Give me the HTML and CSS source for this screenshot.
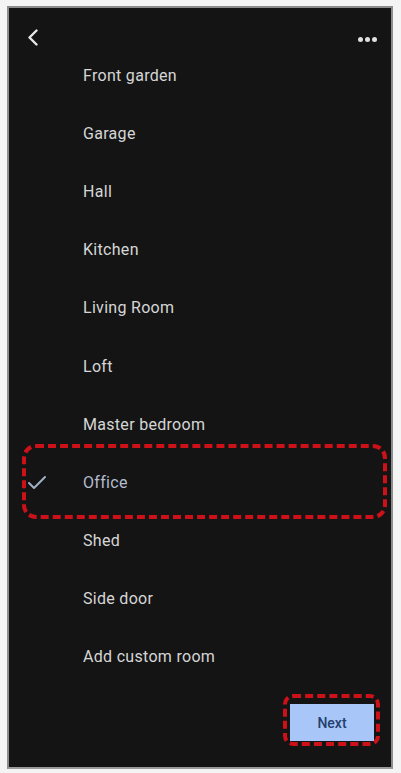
FILE: index.html
```html
<!DOCTYPE html>
<html lang="en">
<head>
    <meta charset="UTF-8">
    <meta name="viewport" content="width=device-width, initial-scale=1.0">
    <title>Choose room</title>
    <link rel="stylesheet" href="styles.css">
</head>
<body>
    <div class="screen">
        <div class="top-bar">
            <svg class="back-icon" width="12" height="17" viewBox="0 0 12 17">
                <path d="M9.5 1.5 L2.5 8.5 L9.5 15.5" fill="none" stroke="#e8e8e8" stroke-width="2.4" stroke-linecap="round" stroke-linejoin="round"/>
            </svg>
            <div class="more-icon">
                <span></span><span></span><span></span>
            </div>
        </div>

        <ul class="room-list">
            <li class="room">Front garden</li>
            <li class="room">Garage</li>
            <li class="room">Hall</li>
            <li class="room">Kitchen</li>
            <li class="room">Living Room</li>
            <li class="room">Loft</li>
            <li class="room">Master bedroom</li>
            <li class="room selected">
                <svg class="check" width="20" height="15" viewBox="0 0 20 15">
                    <path d="M2 8 L7 13 L18 2" fill="none" stroke="#9fb1c6" stroke-width="2" stroke-linecap="round" stroke-linejoin="round"/>
                </svg>
                Office
                <div class="highlight"></div>
            </li>
            <li class="room">Shed</li>
            <li class="room">Side door</li>
            <li class="room">Add custom room</li>
        </ul>

        <div class="footer">
            <div class="next-wrap">
                <button class="next-btn">Next</button>
            </div>
        </div>
    </div>
</body>
</html>
```

FILE: styles.css
```css
* {
    margin: 0;
    padding: 0;
    box-sizing: border-box;
}

body {
    background: #f4f4f4;
    font-family: 'Roboto', 'Liberation Sans', sans-serif;
    padding: 6px 0 0 7px;
}

.screen {
    width: 386px;
    height: 763px;
    background: #141414;
    border: 2px solid #8c8c8c;
    border-bottom-color: #9a9a9a;
    display: flex;
    flex-direction: column;
}

.top-bar {
    height: 38px;
    display: flex;
    justify-content: space-between;
    align-items: flex-start;
    padding: 21px 14px 0 18px;
}

.back-icon {
    display: block;
}

.more-icon {
    display: flex;
    gap: 2px;
    margin-top: 8px;
}

.more-icon span {
    width: 5px;
    height: 5px;
    border-radius: 50%;
    background: #e0e0e0;
}

.room-list {
    list-style: none;
}

.room {
    position: relative;
    height: 58.2px;
    display: flex;
    align-items: center;
    padding-left: 74px;
    color: #d6d6d6;
    font-size: 16px;
    letter-spacing: 0.3px;
}

.room.selected {
    color: #b3bccd;
}

.check {
    position: absolute;
    left: 18px;
    top: 22px;
}

.highlight {
    position: absolute;
    left: 13px;
    right: 4px;
    top: -9px;
    bottom: -7px;
    border: 4px dashed #cc1118;
    border-radius: 14px;
}

.footer {
    flex: 1;
    display: flex;
    justify-content: flex-end;
    align-items: flex-start;
    padding: 8px 11px 0 0;
}

.next-wrap {
    border: 4px dashed #cc1118;
    border-radius: 10px;
    padding: 6px 2px 1px 3px;
}

.next-btn {
    display: block;
    width: 84px;
    height: 37px;
    border: none;
    background: #a8c6f8;
    color: #24406c;
    font-family: 'Roboto', 'Liberation Sans', sans-serif;
    font-size: 14px;
    font-weight: 500;
}
```
